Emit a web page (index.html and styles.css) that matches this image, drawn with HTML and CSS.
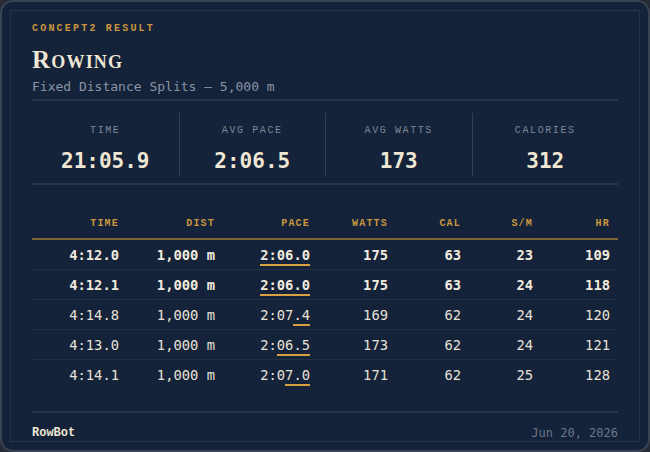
FILE: index.html
```html
<!DOCTYPE html>
<html>
<head>
<meta charset="utf-8">
<link rel="stylesheet" href="styles.css">
</head>
<body>
<div class="card">
  <div class="inner">
    <div class="eyebrow">CONCEPT2 RESULT</div>
    <h1 class="title">Rowing</h1>
    <div class="subtitle">Fixed Distance Splits – 5,000 m</div>
    <div class="stats">
      <div class="stat"><div class="stat-label">TIME</div><div class="stat-value">21:05.9</div></div>
      <div class="stat"><div class="stat-label">AVG PACE</div><div class="stat-value">2:06.5</div></div>
      <div class="stat"><div class="stat-label">AVG WATTS</div><div class="stat-value">173</div></div>
      <div class="stat"><div class="stat-label">CALORIES</div><div class="stat-value">312</div></div>
    </div>
    <table class="splits">
      <colgroup>
        <col class="c-time"><col class="c-dist"><col class="c-pace"><col class="c-watts"><col class="c-cal"><col class="c-sm"><col class="c-hr">
      </colgroup>
      <thead>
        <tr><th>TIME</th><th>DIST</th><th>PACE</th><th>WATTS</th><th>CAL</th><th>S/M</th><th>HR</th></tr>
      </thead>
      <tbody>
        <tr class="best"><td>4:12.0</td><td>1,000 m</td><td><span class="hl">2:06.0</span></td><td>175</td><td>63</td><td>23</td><td>109</td></tr>
        <tr class="best"><td>4:12.1</td><td>1,000 m</td><td><span class="hl">2:06.0</span></td><td>175</td><td>63</td><td>24</td><td>118</td></tr>
        <tr><td>4:14.8</td><td>1,000 m</td><td>2:07<span class="hl">.4</span></td><td>169</td><td>62</td><td>24</td><td>120</td></tr>
        <tr><td>4:13.0</td><td>1,000 m</td><td>2:<span class="hl">06.5</span></td><td>173</td><td>62</td><td>24</td><td>121</td></tr>
        <tr><td>4:14.1</td><td>1,000 m</td><td>2:0<span class="hl">7.0</span></td><td>171</td><td>62</td><td>25</td><td>128</td></tr>
      </tbody>
    </table>
    <div class="footer">
      <span class="brand">RowBot</span>
      <span class="date">Jun 20, 2026</span>
    </div>
  </div>
</div>
</body>
</html>
```
FILE: styles.css
```css
html, body {
  margin: 0;
  padding: 0;
  background: #262c36;
}
.card {
  box-sizing: border-box;
  width: 650px;
  height: 452px;
  background: #14223a;
  border: 2px solid #3a4352;
  border-radius: 13px;
  padding: 8px;
}
.inner {
  box-sizing: border-box;
  height: 100%;
  border: 1px solid #26334a;
  padding: 11px 21px 0 21px;
  display: flex;
  flex-direction: column;
}
.eyebrow {
  font-family: "Liberation Mono", monospace;
  font-weight: bold;
  font-size: 10px;
  letter-spacing: 2.2px;
  color: #c9963f;
  line-height: 14px;
}
.title {
  margin: 10px 0 0 0;
  font-family: "Liberation Serif", serif;
  font-variant: small-caps;
  font-weight: bold;
  font-size: 25px;
  letter-spacing: 1.2px;
  color: #efe7d4;
  line-height: 28px;
}
.subtitle {
  font-family: "DejaVu Sans Mono", monospace;
  font-size: 13px;
  color: #8b94a2;
  line-height: 18px;
  margin-top: 4px;
  padding-bottom: 3px;
  border-bottom: 2px solid #273449;
}
.stats {
  display: grid;
  grid-template-columns: repeat(4, 1fr);
  padding: 12px 0 7px 0;
  border-bottom: 2px solid #273449;
}
.stat {
  text-align: center;
  border-left: 1px solid #33405a;
  padding: 11px 0 2px 0;
}
.stat:first-child { border-left: none; }
.stat-label {
  font-family: "Liberation Mono", monospace;
  font-size: 10px;
  letter-spacing: 1.6px;
  color: #7f8794;
  line-height: 14px;
}
.stat-value {
  font-family: "DejaVu Sans Mono", monospace;
  font-weight: bold;
  font-size: 21px;
  color: #efe7d4;
  line-height: 26px;
  margin-top: 10px;
}
.splits {
  margin-top: 32px;
  border-collapse: collapse;
  width: 100%;
  table-layout: fixed;
  font-family: "DejaVu Sans Mono", monospace;
}
.c-time { width: 95px; }
.c-dist { width: 96px; }
.c-pace { width: 95px; }
.c-watts { width: 78px; }
.c-cal { width: 73px; }
.c-sm { width: 72px; }
.c-hr { width: 77px; }
.splits th {
  font-family: "Liberation Mono", monospace;
  font-weight: bold;
  font-size: 10px;
  letter-spacing: 1.2px;
  color: #c9963f;
  text-align: right;
  padding: 0 8px 7px 0;
  border-bottom: 2px solid #7c6437;
  line-height: 14px;
}
.splits td {
  font-size: 13.8px;
  color: #e6e1d6;
  text-align: right;
  padding: 0 8px 0 0;
  height: 29px;
  border-bottom: 1px solid #1f2d45;
  line-height: 18px;
}
.splits tbody tr:last-child td { border-bottom: none; }
.splits tr.best td {
  font-weight: bold;
  color: #f1ebde;
}
.hl {
  border-bottom: 2.5px solid #d9a042;
  padding-bottom: 1px;
}
.footer {
  margin-top: auto;
  border-top: 2px solid #273449;
  padding-top: 12px;
  display: flex;
  justify-content: space-between;
  font-family: "DejaVu Sans Mono", monospace;
  font-size: 12px;
  line-height: 16px;
}
.brand { color: #efe7d4; font-weight: bold; font-family: "Liberation Mono", monospace; }
.date { color: #6e7785; }
```
